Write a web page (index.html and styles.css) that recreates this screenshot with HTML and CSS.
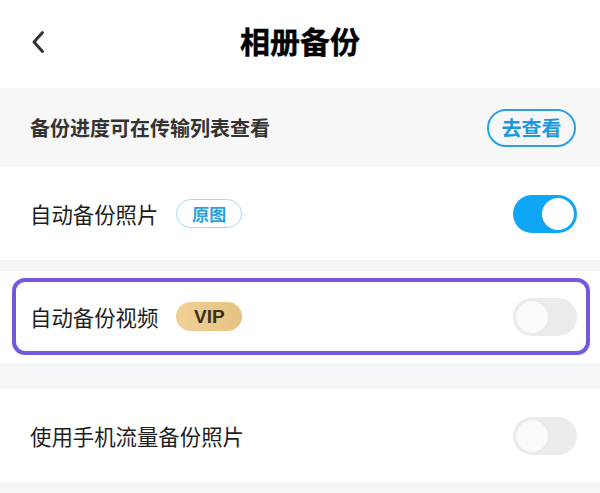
FILE: index.html
```html
<!DOCTYPE html>
<html lang="zh-CN">
<head>
<meta charset="utf-8">
<title>相册备份</title>
<link rel="stylesheet" href="styles.css">
</head>
<body>
<div class="page">
  <header class="header">
    <div class="back">
      <svg width="16" height="24" viewBox="0 0 16 24"><path d="M12.5 2.5 L4 12 L12.5 21.5" fill="none" stroke="#333" stroke-width="3" stroke-linecap="round" stroke-linejoin="round"/></svg>
    </div>
    <h1 class="title">相册备份</h1>
    <div class="spacer"></div>
  </header>

  <div class="info">
    <span class="info-text">备份进度可在传输列表查看</span>
    <button class="go">去查看</button>
  </div>

  <div class="row">
    <div class="label">
      <span>自动备份照片</span>
      <span class="tag tag-orig">原图</span>
    </div>
    <span class="switch on"><span class="knob"></span></span>
  </div>

  <div class="gap gap-s"></div>

  <div class="row-wrap">
    <div class="highlight">
      <div class="label">
        <span>自动备份视频</span>
        <span class="tag tag-vip">VIP</span>
      </div>
      <span class="switch"><span class="knob"></span></span>
    </div>
  </div>

  <div class="gap gap-l"></div>

  <div class="row">
    <div class="label">
      <span>使用手机流量备份照片</span>
    </div>
    <span class="switch"><span class="knob"></span></span>
  </div>

  <div class="gap gap-end"></div>
</div>
</body>
</html>
```

FILE: styles.css
```css
* { box-sizing: border-box; }
html, body { margin: 0; padding: 0; background: #ffffff; }
body {
  font-family: "Noto Sans CJK SC", "Noto Sans", "Liberation Sans", sans-serif;
  color: #222;
}
.page { width: 600px; display: flex; flex-direction: column; }

.header {
  height: 88px;
  padding-bottom: 8px;
  display: grid;
  grid-template-columns: 1fr auto 1fr;
  align-items: center;
}
.back { padding-left: 30px; padding-top: 4px; display: flex; align-items: center; }
.title {
  margin: 0;
  font-size: 30px;
  font-weight: 700;
  color: #000;
  line-height: 1;
  -webkit-text-stroke: 0.4px #000;
}

.info {
  height: 79px;
  background: #f7f7f7;
  display: flex;
  align-items: center;
  justify-content: space-between;
  padding: 0 24px 0 30px;
}
.info-text { font-size: 20px; font-weight: 700; color: #333; }
.go {
  width: 89px;
  height: 38px;
  border: 2px solid #2c9fe0;
  border-radius: 19px;
  background: transparent;
  color: #1c9ae0;
  font-family: inherit;
  font-size: 20px;
  font-weight: 700;
  padding: 0;
  line-height: 1;
}

.row {
  height: 93px;
  display: flex;
  align-items: center;
  justify-content: space-between;
  padding: 0 23px 0 30px;
  background: #fff;
}
.label {
  display: flex;
  align-items: center;
  gap: 18px;
  font-size: 21.4px;
  color: #1e1e1e;
}
.tag {
  width: 66px;
  height: 29px;
  border-radius: 15px;
  display: inline-flex;
  align-items: center;
  justify-content: center;
  font-weight: 700;
  line-height: 1;
}
.tag-orig {
  border: 1.5px solid #a9d9ee;
  color: #2a9fdc;
  font-size: 17px;
}
.tag-vip {
  background: linear-gradient(90deg, #efd196, #e6c282);
  color: #3a2f1f;
  font-size: 19px;
  font-family: "Liberation Sans", Arial, sans-serif;
  font-weight: 700;
}

.gap { background: #f4f5f7; }
.gap-s { height: 11px; }
.gap-l { height: 26px; }
.gap-end { height: 12px; }

.row-wrap {
  height: 92px;
  padding: 7px 10px 8px 12px;
  background: #fff;
}
.highlight {
  height: 77px;
  border: 4px solid #7459e0;
  border-radius: 13px;
  display: flex;
  align-items: center;
  justify-content: space-between;
  padding: 0 9px 0 14px;
}

.switch {
  width: 64px;
  height: 38px;
  border-radius: 19px;
  background: #ebebeb;
  display: flex;
  align-items: center;
  padding: 0 3px;
  flex-shrink: 0;
}
.switch .knob {
  width: 32px;
  height: 32px;
  border-radius: 50%;
  background: #fafafa;
  box-shadow: 0 0 1px rgba(0,0,0,0.06);
}
.switch.on { background: #10a6f6; justify-content: flex-end; }
.switch.on .knob { background: #fff; }
```
